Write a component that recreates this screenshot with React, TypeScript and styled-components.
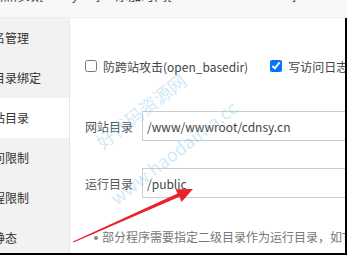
import styled, { createGlobalStyle } from "styled-components"

const GlobalStyle = createGlobalStyle`
    html, body {
        margin: 0;
        padding: 0;
        background: #000;
    }
    * {
        box-sizing: border-box;
    }
`

const Window = styled.div`
    position: relative;
    width: 347px;
    height: 255px;
    overflow: hidden;
    background: #000;
    font-family: "Noto Sans CJK SC", "Noto Sans", sans-serif;
`

// the dialog is larger than the shot, so it is pulled up and left
const Dialog = styled.div`
    width: 377px;
    margin: -24px 0 0 -30px;
`

const Header = styled.div`
    height: 42px;
    padding: 10px 0 0 17px;
    background: #f8f8f8;
    border-bottom: 1px solid #eee;
    color: #444;
    font-size: 13px;
    line-height: 18px;
    white-space: nowrap;
    overflow: hidden;
`

const Body = styled.div`
    display: flex;
    width: 375px;
    height: 235px;
    background: #fff;
`

const Sidebar = styled.ul`
    width: 100px;
    flex-shrink: 0;
    margin: 0;
    padding: 0;
    list-style: none;
    background: #f2f2f2;
    border-right: 1px solid #e6e6e6;
`

const MenuItem = styled.li<{ active?: boolean }>`
    height: 40px;
    line-height: 40px;
    padding-left: 11px;
    font-size: 12px;
    color: #333;
    white-space: nowrap;
    background: ${props => props.active ? "#fff" : "transparent"};
`

const Content = styled.div`
    flex: 1;
    padding: 38px 0 0 15px;
    overflow: hidden;
    color: #555;
    font-size: 12px;
`

const CheckRow = styled.div`
    display: flex;
    align-items: center;
    height: 20px;
    white-space: nowrap;
`

const CheckLabel = styled.label`
    display: flex;
    align-items: center;
    margin-right: 22px;
    color: #444;
    input {
        width: 12px;
        height: 12px;
        margin: 0 6px 0 0;
        accent-color: #0075ff;
    }
`

const FieldRow = styled.div<{ gap: number }>`
    display: flex;
    align-items: center;
    margin-top: ${props => props.gap}px;
`

const FieldLabel = styled.span`
    width: 57px;
    flex-shrink: 0;
    color: #555;
    white-space: nowrap;
`

const TextInput = styled.input`
    width: 340px;
    flex-shrink: 0;
    height: 30px;
    padding: 0 4px;
    border: 1px solid #ccc;
    border-radius: 0;
    outline: none;
    color: #444;
    font-size: 12px;
    font-family: "Noto Sans CJK SC", "Noto Sans", sans-serif;
`

const Notes = styled.ul`
    margin: 29px 0 0;
    padding-left: 17px;
    list-style: none;
    color: #777;
    line-height: 20px;
    white-space: nowrap;
    li::before {
        content: "";
        display: inline-block;
        width: 4px;
        height: 4px;
        margin: 0 4px 2px -8px;
        border-radius: 50%;
        background: #888;
        vertical-align: middle;
    }
`

const Watermark = styled.span<{ size: number }>`
    position: absolute;
    transform-origin: left bottom;
    transform: rotate(-38deg);
    color: rgba(130, 195, 235, 0.38);
    font-size: ${props => props.size}px;
    font-family: "Noto Sans CJK SC", "Noto Sans", sans-serif;
    white-space: nowrap;
    pointer-events: none;
`

const ArrowLayer = styled.svg`
    position: absolute;
    left: 0;
    top: 0;
    pointer-events: none;
`

const menu = ["域名管理", "子目录绑定", "网站目录", "访问限制", "进程限制", "伪静态"]

export default function App() {
    return (
        <Window>
            <GlobalStyle />
            <Dialog>
                <Header>站点修改[cdnsy.cn] -- 添加时间[2021-05-29 11:10:25]</Header>
                <Body>
                    <Sidebar>
                        {menu.map(m => (
                            <MenuItem key={m} active={m === "网站目录"}>{m}</MenuItem>
                        ))}
                    </Sidebar>
                    <Content>
                        <CheckRow>
                            <CheckLabel><input type="checkbox" readOnly />防跨站攻击(open_basedir)</CheckLabel>
                            <CheckLabel><input type="checkbox" checked readOnly />写访问日志</CheckLabel>
                        </CheckRow>
                        <FieldRow gap={35}>
                            <FieldLabel>网站目录</FieldLabel>
                            <TextInput defaultValue="/www/wwwroot/cdnsy.cn" />
                        </FieldRow>
                        <FieldRow gap={27}>
                            <FieldLabel>运行目录</FieldLabel>
                            <TextInput defaultValue="/public" />
                        </FieldRow>
                        <Notes>
                            <li>部分程序需要指定二级目录作为运行目录，如ThinkPHP5，Laravel</li>
                        </Notes>
                    </Content>
                </Body>
            </Dialog>
            <Watermark size={18} style={{ left: 106, top: 128 }}>好代码资源网</Watermark>
            <Watermark size={18} style={{ left: 120, top: 184 }}>www.haodaima.cc</Watermark>
            <ArrowLayer width="347" height="255" viewBox="0 0 347 255">
                <polygon
                    points="73,241.5 73.4,242.5 179.5,196.8 181.5,202 193,189 175.5,189.2 177.5,193.5"
                    fill="#e8242a"
                />
            </ArrowLayer>
        </Window>
    )
}
